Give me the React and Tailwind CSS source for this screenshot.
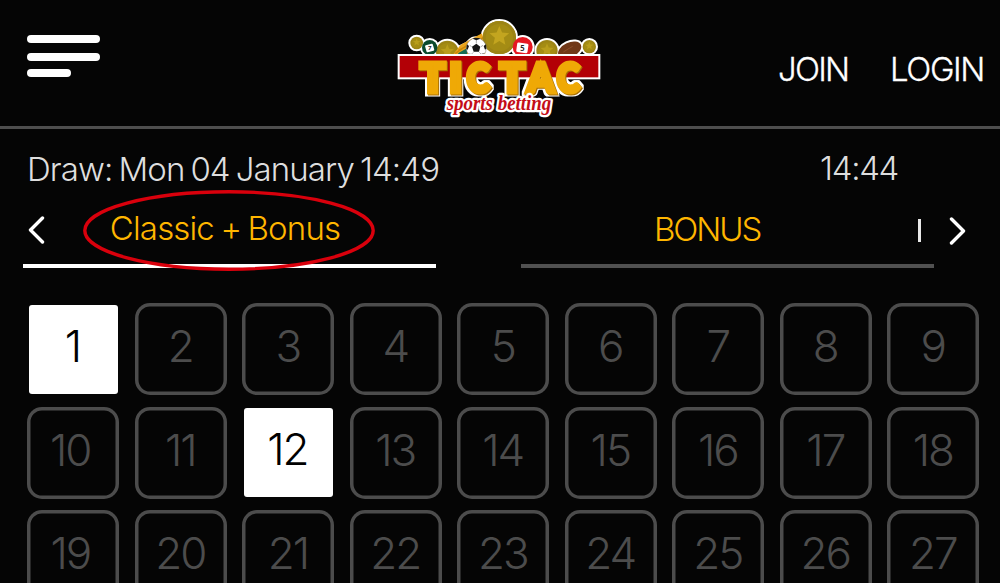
import React from "react";

const tiles = Array.from({ length: 27 }, (_, i) => i + 1);
const selected = [1, 12];

const titleLetters = [
  ["T", 91, 74],
  ["I", 178, 38],
  ["C", 230, 68],
  ["T", 329, 74],
  ["A", 412, 80],
  ["C", 500, 68],
];

const coins = [
  [80, 99, 19],
  [172, 126, 34],
  [328, 83, 50],
  [471, 122, 32],
  [598, 110, 20],
];

function star(cx, cy, r) {
  return Array.from({ length: 10 }, (_, i) => {
    const a = -Math.PI / 2 + (i * Math.PI) / 5;
    const q = i % 2 ? r * 0.45 : r;
    return `${(cx + q * Math.cos(a)).toFixed(1)},${(cy + q * Math.sin(a)).toFixed(1)}`;
  }).join(" ");
}

function Logo() {
  return (
    <svg viewBox="0 0 660 345" className="h-[115px] w-[220px] shrink-0">
      <defs>
        <filter id="title" filterUnits="userSpaceOnUse" x="0" y="130" width="660" height="160" colorInterpolationFilters="sRGB">
          <feMorphology in="SourceAlpha" operator="dilate" radius="5" result="wide" />
          <feFlood floodColor="#fff" x="0" y="204" width="660" height="86" result="white" />
          <feComposite in="white" in2="wide" operator="in" result="outline" />
          <feOffset in="SourceAlpha" dx="2" dy="2" result="shift" />
          <feFlood floodColor="#a66d05" result="brown" />
          <feComposite in="brown" in2="shift" operator="in" result="shade" />
          <feMerge>
            <feMergeNode in="outline" />
            <feMergeNode in="shade" />
            <feMergeNode in="SourceGraphic" />
          </feMerge>
        </filter>
      </defs>
      <g fill="#fff" stroke="#fff" strokeWidth="12">
        {coins.map(([x, y, r]) => (
          <circle key={x} cx={x} cy={y} r={r} />
        ))}
        <circle cx="119" cy="113" r="23" />
        <circle cx="259" cy="114" r="29" />
        <circle cx="398" cy="111" r="30" />
        <ellipse cx="539" cy="120" rx="37" ry="22" transform="rotate(-25 539 120)" />
        <path d="M192 132 210 111 285 75 300 132Z" />
      </g>
      {coins.map(([x, y, r]) => (
        <g key={x}>
          <circle cx={x} cy={y} r={r} fill="#9c8415" />
          <circle cx={x} cy={y} r={r * 0.8} fill="#a48c14" />
          <polygon points={star(x, y - 2, r * 0.62)} fill="#b99e1c" />
        </g>
      ))}
      <path d="M190 133 212 104 276 70 284 96 286 136Z" fill="#eba51b" />
      <path d="M204 130 236 112 230 136H208Z" fill="#176b52" />
      <path d="M196 130 250 93M205 121 282 82" stroke="#c8870b" strokeWidth="4" />
      <circle cx="328" cy="83" r="50" fill="#9c8415" />
      <circle cx="328" cy="83" r="41" fill="#a48c14" />
      <polygon points={star(328, 79, 31)} fill="#c3a51f" />
      <circle cx="119" cy="113" r="23" fill="#0a4a2d" />
      <rect x="107" y="103" width="24" height="22" rx="3" fill="#fff" transform="rotate(-15 119 114)" />
      <text x="114" y="121" fontFamily="Lato, sans-serif" fontWeight="900" fontSize="18" fill="#222">7</text>
      <circle cx="259" cy="114" r="30" fill="#fff" stroke="#777" strokeWidth="1.5" />
      <path d="m259 101 12 9-4 15h-16l-5-15ZM248 86l11 5 12-5-5-2h-13ZM231 103l6 5-4 11-4-2ZM288 103l-7 5 4 11 4-3ZM237 131l8 1 3 8h-7ZM273 132l9-2-6 9-5 1Z" fill="#151515" />
      <path d="M259 90v10M239 106l6 4M273 110l6-4M250 127l-5 5M268 127l5 5" stroke="#555" strokeWidth="1.5" />
      <circle cx="398" cy="111" r="30" fill="#e51822" />
      <rect x="380" y="99" width="34" height="29" rx="4" fill="#fff" transform="rotate(8 397 114)" />
      <text x="390" y="123" fontFamily="Lato, sans-serif" fontWeight="900" fontSize="24" fill="#222">5</text>
      <ellipse cx="539" cy="120" rx="37" ry="22" fill="#713817" transform="rotate(-25 539 120)" />
      <path d="M520 126Q534 117 548 109" stroke="#8a4d28" strokeWidth="3" fill="none" />
      <rect x="26" y="135" width="602" height="70" fill="#b30006" stroke="#fff" strokeWidth="6" />
      <g
        filter="url(#title)"
        fontFamily="Lato, sans-serif"
        fontWeight="900"
        fontSize="122"
        fill="#efa906"
        stroke="#efa906"
        strokeWidth="15"
      >
        {titleLetters.map(([c, x, w], i) => (
          <text key={i} x={x} y="245" textLength={w} lengthAdjust="spacingAndGlyphs">
            {c}
          </text>
        ))}
      </g>
      <text
        x="170"
        y="299"
        textLength="314"
        lengthAdjust="spacingAndGlyphs"
        fontFamily="Liberation Serif, serif"
        fontStyle="italic"
        fontWeight="700"
        fontSize="60"
        fill="#c40d17"
        stroke="#fff"
        strokeWidth="14"
        strokeLinejoin="round"
        paintOrder="stroke"
      >
        sports betting
      </text>
    </svg>
  );
}

function Chevron({ d }) {
  return (
    <svg viewBox="0 0 17 28" className="h-7 w-[17px] shrink-0" fill="none" stroke="#fff" strokeWidth="3.4" strokeLinecap="round" strokeLinejoin="round">
      <path d={d} />
    </svg>
  );
}

export default function App() {
  return (
    <div className="flex h-[583px] w-[1000px] flex-col overflow-hidden bg-[#050505] font-['Inter',sans-serif] font-light whitespace-nowrap">
      <header className="flex h-[129px] shrink-0 items-start justify-between border-b-3 border-[#4e4e4e] text-[33px] leading-10 text-white">
        <div className="flex w-[390px] flex-col pt-[35px] pl-[27px]">
          <div className="h-2 w-[73px] rounded-full bg-white" />
          <div className="mt-[10px] h-2 w-[73px] rounded-full bg-white" />
          <div className="mt-2 h-2 w-11 rounded-full bg-white" />
        </div>
        <div className="pt-[10px]">
          <Logo />
        </div>
        <nav className="flex w-[390px] pt-[49px] pl-[168px] font-light">
          <span className="w-[112px] tracking-[-1.8px] [-webkit-text-stroke:0.3px_white]">JOIN</span>
          <span className="tracking-[-1.4px] [-webkit-text-stroke:0.3px_white]">LOGIN</span>
        </nav>
      </header>

      <div className="flex h-[71px] shrink-0 pt-5 pl-[27px] text-[33px] leading-10 text-[#dedede]">
        <span className="w-[793px] tracking-[-0.9px] [word-spacing:-2.4px]">Draw: Mon 04 January 14:49</span>
        <span className="-mt-px tracking-[-1.3px]">14:44</span>
      </div>

      <div className="relative flex h-[68px] shrink-0 text-[33px] leading-10 text-[#ffb600]">
        <div className="-mr-[22px] ml-7 flex w-[17px] shrink-0 pt-4">
          <Chevron d="M14.5 2 2.5 14l12 12" />
        </div>
        <div className="flex h-[68px] w-[413px] justify-center border-b-4 border-white pt-2 pr-[9px]">
          <span className="tracking-[-0.85px] [word-spacing:-2px]">Classic + Bonus</span>
        </div>
        <div className="ml-[85px] flex h-[68px] w-[413px] border-b-4 border-[#515151] pt-[9px] pl-[133px]">
          <span className="w-[264px] tracking-[-2.1px]">BONUS</span>
          <div className="mt-[10px] h-[23px] w-[3px] bg-[#e8e8e8]" />
        </div>
        <div className="flex pt-[17px] pl-[15px]">
          <Chevron d="M2.5 2 14.5 14l-12 12" />
        </div>
        <svg viewBox="0 0 294 82" className="absolute top-[-11px] left-[82px] h-[82px] w-[294px]" fill="none">
          <ellipse cx="147" cy="41.5" rx="144.2" ry="38.7" stroke="#d9000c" strokeWidth="3.4" />
        </svg>
      </div>

      <main className="grid shrink-0 grid-cols-[repeat(9,92px)] gap-x-[15.5px] gap-y-[11.7px] pt-[35px] pl-[27.3px] text-[44px] leading-none font-[350] tracking-[-2px]">
        {tiles.map((n) =>
          selected.includes(n) ? (
            <div key={n} className="flex h-[92px] items-center justify-center p-[1.5px]">
              <div className="flex h-[89px] w-[89px] items-center justify-center rounded-[3px] bg-white pr-[2px] pb-[7px] text-black">
                {n}
              </div>
            </div>
          ) : (
            <div
              key={n}
              className={
                "flex h-[92px] items-center justify-center rounded-[15px] pb-[6px] text-[#4c4c4c] shadow-[inset_0_0_0_3.5px_#4c4c4c] " +
                (n % 9 === 1 ? "pr-[6px]" : "pr-[1px]")
              }
            >
              {n}
            </div>
          ),
        )}
      </main>
    </div>
  );
}
